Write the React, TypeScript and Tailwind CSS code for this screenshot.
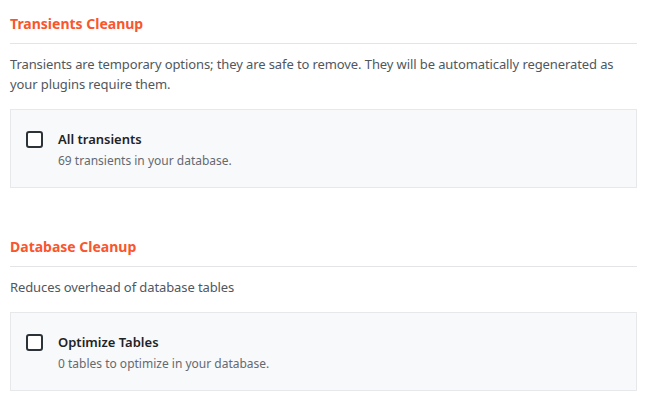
import { useState } from 'react';

interface CleanupItem {
  id: string;
  label: string;
  detail: string;
}

interface CleanupSection {
  title: string;
  description: React.ReactNode;
  items: CleanupItem[];
}

const sections: CleanupSection[] = [
  {
    title: 'Transients Cleanup',
    description: (
      <>
        Transients are temporary options; they are safe to remove. They will be automatically regenerated as
        <br />
        your plugins require them.
      </>
    ),
    items: [{ id: 'transients', label: 'All transients', detail: '69 transients in your database.' }],
  },
  {
    title: 'Database Cleanup',
    description: 'Reduces overhead of database tables',
    items: [{ id: 'optimize', label: 'Optimize Tables', detail: '0 tables to optimize in your database.' }],
  },
];

function Checkbox({ checked, onChange }: { checked: boolean; onChange: () => void }) {
  return (
    <button
      type="button"
      onClick={onChange}
      className="mt-[1px] w-[17px] h-[17px] shrink-0 rounded-[3px] border-2 border-[#2c3338] bg-white flex items-center justify-center"
    >
      {checked && (
        <svg viewBox="0 0 16 16" className="w-3 h-3" fill="none" stroke="#2c3338" strokeWidth="2.5">
          <path d="M3 8.5l3 3 7-7" />
        </svg>
      )}
    </button>
  );
}

export default function App() {
  const [checked, setChecked] = useState<Record<string, boolean>>({});

  const toggle = (id: string) => setChecked((prev) => ({ ...prev, [id]: !prev[id] }));

  return (
    <div className="w-[650px] min-h-[405px] bg-white px-[10px] pb-4 font-['Noto_Sans',sans-serif] text-[13px]">
      {sections.map((section, idx) => (
        <section key={section.title} className={idx === 0 ? 'pt-[14px]' : 'mt-[49px]'}>
          {/* Section header */}
          <h2 className="w-[627px] pb-[9px] border-b border-[#e2e4e7] text-[14px] leading-[20px] font-bold text-[#f9562d]">
            {section.title}
          </h2>

          <p className="mt-[10px] leading-[20px] text-[#50575e] tracking-[-0.1px]">{section.description}</p>

          {section.items.map((item) => (
            <div
              key={item.id}
              className="mt-[15px] w-[627px] border border-[#e6e8eb] bg-[#f8f9fb] pl-[15px] pt-[20px] pb-[17px] flex gap-[15px]"
            >
              <Checkbox checked={!!checked[item.id]} onChange={() => toggle(item.id)} />
              <div className="flex flex-col gap-[4px]">
                <span className="leading-[18px] font-semibold text-[#1d2327]">{item.label}</span>
                <span className="text-[12px] leading-[18px] text-[#646970]">{item.detail}</span>
              </div>
            </div>
          ))}
        </section>
      ))}
    </div>
  );
}
